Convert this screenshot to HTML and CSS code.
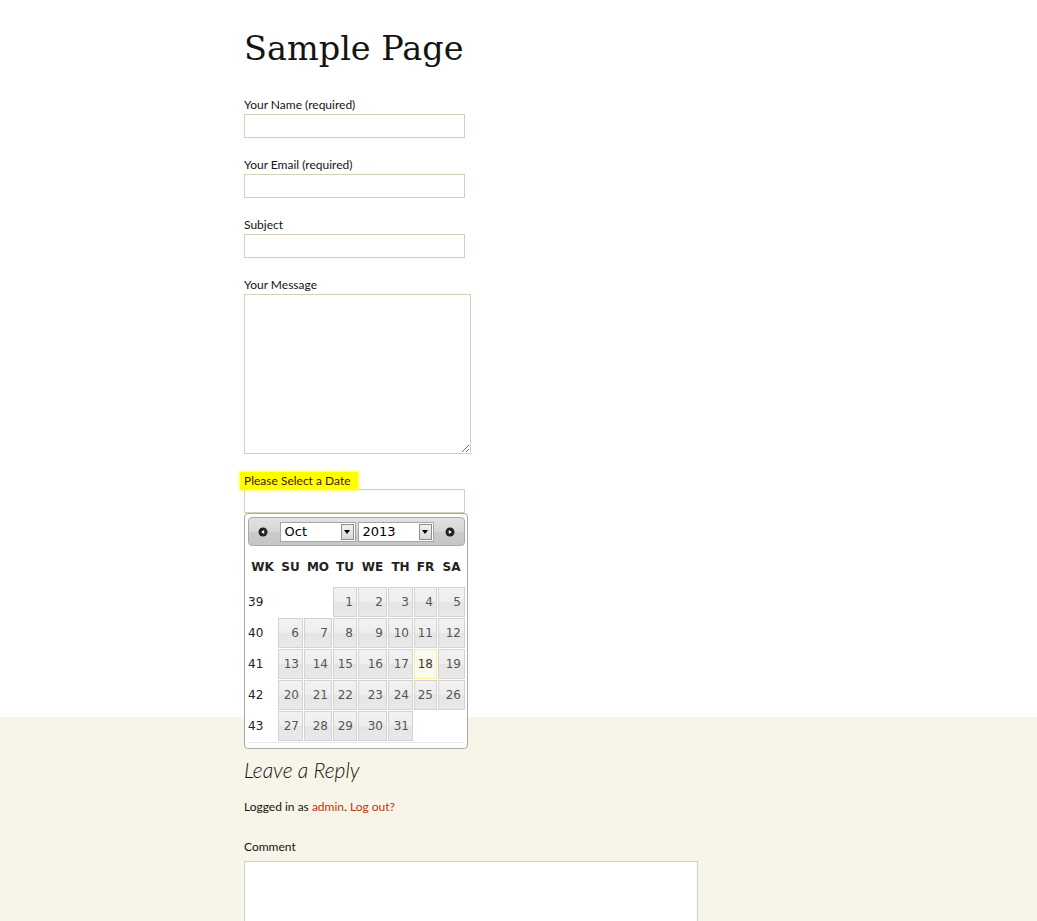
FILE: index.html
```html
<!DOCTYPE html>
<html lang="en">
<head>
<meta charset="utf-8">
<title>Sample Page</title>
<link rel="stylesheet" href="styles.css">
</head>
<body>
<main class="page">
  <div class="column">
    <h1 class="entry-title">Sample Page</h1>
    <form class="contact-form">
      <div class="field">
        <label class="field-label">Your Name (required)</label>
        <input class="text-input" type="text">
      </div>
      <div class="field">
        <label class="field-label">Your Email (required)</label>
        <input class="text-input" type="text">
      </div>
      <div class="field">
        <label class="field-label">Subject</label>
        <input class="text-input" type="text">
      </div>
      <div class="field">
        <label class="field-label">Your Message</label>
        <textarea class="message-input"></textarea>
      </div>
      <div class="field date-field">
        <label class="field-label"><span class="highlight">Please Select a Date</span></label>
        <input class="text-input" type="text">
        <div class="picker-anchor">
          <div class="datepicker">
            <div class="dp-header">
              <span class="dp-nav dp-prev">
                <svg width="10" height="10" viewBox="0 0 10 10"><circle cx="5" cy="5" r="4.5" fill="#222"/><path d="M3.2 5 L6.2 3 L6.2 7 Z" fill="#fff"/></svg>
              </span>
              <div class="dp-selects">
                <div class="dp-select"><span class="dp-select-text">Oct</span><span class="dp-select-btn"><span class="dp-arrow"></span></span></div>
                <div class="dp-select"><span class="dp-select-text">2013</span><span class="dp-select-btn"><span class="dp-arrow"></span></span></div>
              </div>
              <span class="dp-nav dp-next">
                <svg width="10" height="10" viewBox="0 0 10 10"><circle cx="5" cy="5" r="4.5" fill="#222"/><path d="M6.8 5 L3.8 3 L3.8 7 Z" fill="#fff"/></svg>
              </span>
            </div>
            <div class="dp-grid">
              <div class="dp-th">WK</div><div class="dp-th">SU</div><div class="dp-th">MO</div><div class="dp-th">TU</div><div class="dp-th">WE</div><div class="dp-th">TH</div><div class="dp-th">FR</div><div class="dp-th">SA</div>

              <div class="dp-wk">39</div><div class="dp-empty"></div><div class="dp-empty"></div><div class="dp-day">1</div><div class="dp-day">2</div><div class="dp-day">3</div><div class="dp-day">4</div><div class="dp-day">5</div>

              <div class="dp-wk">40</div><div class="dp-day">6</div><div class="dp-day">7</div><div class="dp-day">8</div><div class="dp-day">9</div><div class="dp-day">10</div><div class="dp-day">11</div><div class="dp-day">12</div>

              <div class="dp-wk">41</div><div class="dp-day">13</div><div class="dp-day">14</div><div class="dp-day">15</div><div class="dp-day">16</div><div class="dp-day">17</div><div class="dp-day dp-today">18</div><div class="dp-day">19</div>

              <div class="dp-wk">42</div><div class="dp-day">20</div><div class="dp-day">21</div><div class="dp-day">22</div><div class="dp-day">23</div><div class="dp-day">24</div><div class="dp-day">25</div><div class="dp-day">26</div>

              <div class="dp-wk">43</div><div class="dp-day">27</div><div class="dp-day">28</div><div class="dp-day">29</div><div class="dp-day">30</div><div class="dp-day">31</div><div class="dp-empty"></div><div class="dp-empty"></div>
            </div>
            <div class="dp-footer"></div>
          </div>
        </div>
      </div>
    </form>
  </div>
</main>
<section class="comments">
  <div class="column">
    <h3 class="reply-title">Leave a Reply</h3>
    <p class="logged-in">Logged in as <a href="#">admin</a>. <a href="#">Log out?</a></p>
    <label class="field-label comment-label">Comment</label>
    <textarea class="comment-input"></textarea>
  </div>
</section>
</body>
</html>
```

FILE: styles.css
```css
html, body {
  margin: 0;
  padding: 0;
  background: #fff;
  color: #141412;
  font-family: Lato, "Liberation Sans", sans-serif;
}

.column {
  width: 549px;
  margin: 0 auto;
}

.page {
  padding-top: 25px;
  padding-bottom: 204px;
}

.entry-title {
  margin: 0 0 24px;
  font-family: "DejaVu Serif", "Liberation Serif", serif;
  font-weight: normal;
  font-size: 33.5px;
  line-height: 48px;
  color: #141412;
}

.contact-form {
  margin: 0;
}

.field {
  margin-bottom: 19px;
}

.field-label {
  display: block;
  font-size: 12px;
  line-height: 16px;
  margin-bottom: 1px;
  color: #141412;
}

.text-input {
  display: block;
  box-sizing: border-box;
  width: 221px;
  height: 24px;
  margin: 0;
  padding: 2px;
  border: 1px solid #d4d0ba;
  background: #fff;
  font: 12px Lato, sans-serif;
}

.message-input {
  display: block;
  box-sizing: border-box;
  width: 227px;
  height: 160px;
  margin: 0;
  padding: 2px;
  border: 1px solid #d4d0ba;
  background: #fff;
  font: 12px Lato, sans-serif;
}

.date-field {
  margin-bottom: 0;
}

.highlight {
  display: inline-block;
  margin-left: -4px;
  padding: 1px 7px 1px 4px;
  line-height: 16px;
  background: #ffff00;
  box-shadow: 0 0 2px 1px rgba(255, 255, 0, 0.7);
  color: #4d1200;
}

.date-field .field-label {
  margin-top: -1px;
  margin-bottom: -1px;
}

/* Datepicker popup */
.picker-anchor {
  position: relative;
  height: 0;
}

.datepicker {
  position: absolute;
  left: 0;
  top: 0;
  z-index: 5;
  width: 217px;
  padding: 3px 2px 5px 3px;
  border: 1px solid #aaa;
  border-radius: 4px;
  background: #fff;
  font-family: "DejaVu Sans", Verdana, sans-serif;
  font-size: 12px;
}

.dp-header {
  box-sizing: border-box;
  height: 29px;
  display: flex;
  align-items: center;
  justify-content: space-between;
  padding: 0 9px;
  border: 1px solid #aaa;
  border-radius: 4px;
  background: linear-gradient(to bottom, #e2e2e2 0%, #d6d6d6 50%, #cbcbcb 51%, #c6c6c6 100%);
}

.dp-nav {
  display: flex;
  width: 10px;
  height: 10px;
}

.dp-selects {
  display: flex;
  gap: 2px;
}

.dp-select {
  box-sizing: border-box;
  width: 76px;
  height: 20px;
  display: flex;
  align-items: center;
  justify-content: space-between;
  padding: 1px 1px 1px 4px;
  border: 1px solid #a5a5a5;
  background: #fff;
  color: #000;
  font-size: 13px;
}

.dp-select-text {
  line-height: 16px;
}

.dp-select-btn {
  box-sizing: border-box;
  width: 13px;
  height: 16px;
  display: flex;
  align-items: center;
  justify-content: center;
  border: 1px solid #8e8e8e;
  background: linear-gradient(to bottom, #f0f0f0, #d9d9d9);
}

.dp-arrow {
  width: 0;
  height: 0;
  border-left: 3.5px solid transparent;
  border-right: 3.5px solid transparent;
  border-top: 4px solid #000;
}

.dp-grid {
  display: grid;
  grid-template-columns: 29px 25px 28px 24px 29px 25px 23px 27px;
  grid-template-rows: 40px repeat(5, 30px);
  column-gap: 1px;
  row-gap: 1px;
}

.dp-grid > .dp-th {
  margin-bottom: -1px;
}

.dp-th {
  display: flex;
  align-items: center;
  justify-content: center;
  font-weight: bold;
  color: #222;
}

.dp-wk {
  display: flex;
  align-items: center;
  color: #222;
}

.dp-empty {
  background: #fff;
}

.dp-day {
  box-sizing: border-box;
  display: flex;
  align-items: center;
  justify-content: flex-end;
  padding-right: 3px;
  border: 1px solid #d3d3d3;
  background: linear-gradient(to bottom, #f2f2f2 0%, #eeeeee 48%, #e5e5e5 52%, #e9e9e9 100%);
  color: #555;
}

.dp-today {
  border-color: #fcefa1;
  background: #fbf9ee;
  color: #363636;
}

.dp-footer {
  margin-top: 1px;
  height: 1px;
  background: #e6e6e6;
}

/* Comments */
.comments {
  background: #f7f5e7;
  padding-top: 39px;
  padding-bottom: 40px;
}

.reply-title {
  margin: 0 0 15px;
  font-family: Lato, "Liberation Sans", sans-serif;
  font-style: italic;
  font-weight: 300;
  font-size: 21px;
  line-height: 28px;
  color: #141412;
}

.logged-in {
  margin: 0 0 24px;
  font-size: 12px;
  line-height: 16px;
}

.logged-in a {
  color: #bc360a;
  text-decoration: none;
}

.comment-label {
  margin-bottom: 6px;
}

.comment-input {
  display: block;
  box-sizing: border-box;
  width: 454px;
  height: 150px;
  margin: 0;
  border: 1px solid #d4d0ba;
  background: #fff;
}
```
